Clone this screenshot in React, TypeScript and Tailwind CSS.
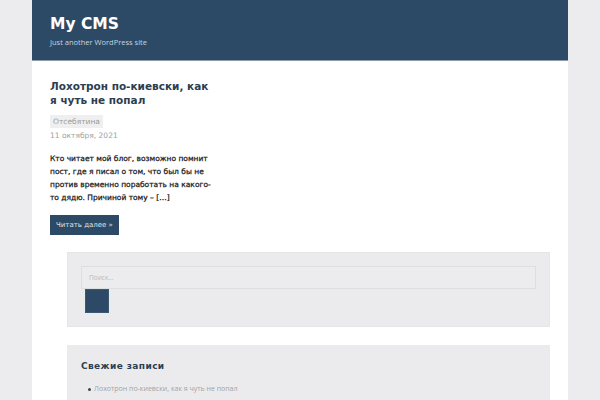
import React from 'react';

const font = { fontFamily: '"DejaVu Sans", Verdana, sans-serif' };

const recentPosts = ['Лохотрон по-киевски, как я чуть не попал'];

function SiteHeader() {
  return (
    <header className="h-[61px] bg-[#2c4a66] px-[18px] pt-[14px] border-b border-[#8a9bb0]">
      <h1 className="text-[15.5px] leading-[21px] font-bold text-white">My CMS</h1>
      <p className="mt-[2px] text-[7.5px] leading-[10px] text-[#c9d3de]" style={{ fontFamily: '"Open Sans", sans-serif' }}>
        Just another WordPress site
      </p>
    </header>
  );
}

function Post() {
  return (
    <article className="w-[166px] pl-[18px] pt-[18px] box-content">
      <h2 className="text-[10.5px] leading-[14px] font-bold text-[#2c3e50]">
        Лохотрон по-киевски, как я чуть не попал
      </h2>
      <span className="mt-[4px] inline-block bg-[#efefef] px-[3px] py-[2px] text-[7.5px] leading-[9px] text-[#9a9a9a]">
        Отсебятина
      </span>
      <div className="text-[7.5px] leading-[10px] text-[#a0a0a0]">11 октября, 2021</div>
      <p className="mt-[11px] text-[7.5px] leading-[13px] text-[#1a1a1a] [-webkit-text-stroke:0.25px_#1a1a1a]">
        Кто читает мой блог, возможно помнит пост, где я писал о том, что был бы не против временно поработать на какого-то дядю. Причиной тому – […]
      </p>
      <button className="mt-[11px] h-[20px] bg-[#2c4a66] px-[6px] text-[7px] text-[#dde3ea]">
        Читать далее »
      </button>
    </article>
  );
}

function Sidebar() {
  return (
    <aside className="mt-[17px] pl-[35px] pr-[18px] flex flex-col gap-[18px]">
      <section className="bg-[#ebebed] border border-[#e6e6e8] px-[13px] pt-[13px] pb-[13px]">
        <div className="h-[23px] border border-[#dedee0] bg-[#ececee] px-[7px] flex items-center text-[6.5px] text-[#b8b8b8]" style={{ fontFamily: '"Open Sans", sans-serif' }}>
          Поиск...
        </div>
        <div className="ml-[4px] w-[24px] h-[24px] bg-[#2c4a66] border border-[#3b5875]" />
      </section>
      <section className="bg-[#ebebed] px-[14px] pt-[15px] pb-[20px]">
        <h3 className="text-[9px] leading-[12px] font-bold tracking-[0.4px] text-[#2c3e50]">Свежие записи</h3>
        <ul className="mt-[12px] pl-[7px]">
          {recentPosts.map((t) => (
            <li key={t} className="flex items-center gap-[3px] text-[7px] leading-[10px] text-[#a3a3a3]" style={{ fontFamily: '"Open Sans", sans-serif' }}>
              <span className="w-[3px] h-[3px] rounded-full bg-[#444]" />
              {t}
            </li>
          ))}
        </ul>
      </section>
    </aside>
  );
}

export default function App() {
  return (
    <div className="min-h-[400px] bg-[#ececee]" style={font}>
      <div className="mx-auto w-[536px] min-h-[400px] bg-white">
        <SiteHeader />
        <Post />
        <Sidebar />
      </div>
    </div>
  );
}
